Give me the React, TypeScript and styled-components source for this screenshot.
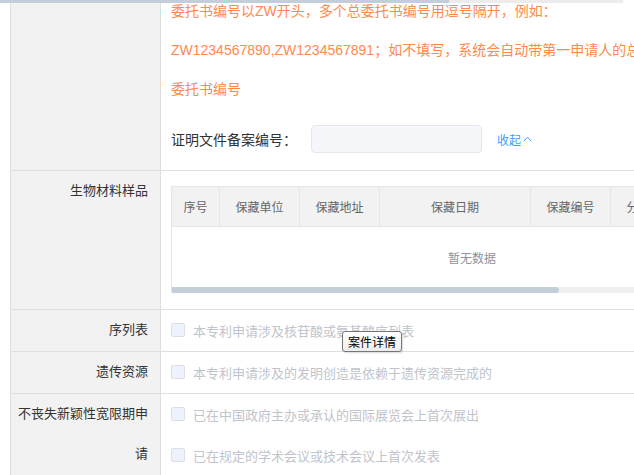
import React from "react";
import styled, { createGlobalStyle } from "styled-components";

const GlobalStyle = createGlobalStyle`
  html, body { margin: 0; padding: 0; background: #fff; }
  body {
    font-family: "Liberation Sans", "Noto Sans CJK SC", sans-serif;
    color: #333;
  }
`;

const Viewport = styled.div`
  position: relative;
  width: 634px;
  height: 475px;
  overflow: hidden;
  background: #fff;
`;

const TopTrack = styled.div`
  position: absolute;
  top: 0;
  left: 0;
  width: 623px;
  height: 3px;
  background: #ececec;
  z-index: 3;
`;

const TopThumb = styled.div`
  width: 449px;
  height: 3px;
  background: #c4ced9;
`;

const Scroller = styled.div`
  margin-top: -8px;
  padding-left: 10px;
`;

const Form = styled.div`
  width: 900px;
  border-left: 1px solid #dedede;
`;

const Row = styled.div`
  display: grid;
  grid-template-columns: 150px 1fr;
  border-bottom: 1px solid #e0e0e0;
`;

const Label = styled.div`
  box-sizing: border-box;
  background: #f2f2f2;
  border-right: 1px solid #dedede;
  text-align: right;
  padding: 0 12px 1px 0;
  font-size: 13px;
  line-height: 40px;
  color: #333;
`;

const Content = styled.div<{ $pad?: string }>`
  padding: ${(p) => p.$pad ?? "0 0 1px"};
  padding-left: 10px;
  min-width: 0;
`;

const Note = styled.div`
  font-size: 14px;
  line-height: 39px;
  color: #ff8a4c;
  white-space: nowrap;
`;

const FilingLine = styled.div`
  display: flex;
  align-items: center;
  height: 40px;
  margin: 10px 0 11px;
`;

const FieldLabel = styled.span`
  font-size: 14px;
  color: #333;
  width: 140px;
  white-space: nowrap;
`;

const TextInput = styled.div`
  box-sizing: border-box;
  width: 171px;
  height: 28px;
  background: #f5f7fa;
  border: 1px solid #e4e7ed;
  border-radius: 4px;
`;

const Toggle = styled.span`
  margin-left: 15px;
  display: inline-flex;
  align-items: center;
  gap: 2px;
  font-size: 12px;
  color: #409eff;
`;

const TableBox = styled.div`
  width: 600px;
  border: 1px solid #e6e6e6;
  border-bottom: none;
  overflow: hidden;
`;

const HeadRow = styled.div`
  box-sizing: border-box;
  display: flex;
  height: 40px;
  background: #f2f2f2;
  border-bottom: 1px solid #e6e6e6;
`;

const HeadCell = styled.div<{ $w: number }>`
  flex: 0 0 ${(p) => p.$w}px;
  box-sizing: border-box;
  border-right: 1px solid #e6e6e6;
  display: flex;
  align-items: center;
  justify-content: center;
  font-size: 12px;
  color: #666;
  white-space: nowrap;
  &:last-child { border-right: none; }
`;

const Empty = styled.div`
  height: 60px;
  display: flex;
  align-items: center;
  justify-content: center;
  font-size: 12px;
  color: #909399;
`;

const ScrollTrack = styled.div`
  height: 6px;
  background: #f0f0f0;
`;

const ScrollThumb = styled.div`
  height: 6px;
  width: 387px;
  background: #c4ced9;
  border-radius: 0 3px 3px 0;
`;

const CheckLine = styled.div`
  display: flex;
  align-items: center;
  height: 40px;
  & + & { margin-top: 1px; }
`;

const Box = styled.span`
  box-sizing: border-box;
  width: 14px;
  height: 14px;
  background: #edf2fc;
  border: 1px solid #dcdfe6;
  border-radius: 2px;
  flex: none;
`;

const CheckText = styled.span`
  margin-left: 8px;
  font-size: 13px;
  color: #c0c4cc;
  white-space: nowrap;
`;

const Tooltip = styled.div`
  position: absolute;
  left: 342px;
  top: 331px;
  box-sizing: border-box;
  width: 60px;
  height: 21px;
  border: 1px solid #767676;
  border-radius: 3px;
  background: linear-gradient(#ffffff, #ededed);
  box-shadow: 1px 1px 2px rgba(0, 0, 0, 0.15);
  font-size: 12px;
  color: #000;
  display: flex;
  align-items: center;
  justify-content: center;
  z-index: 4;
`;

const columns: [string, number][] = [
  ["序号", 48],
  ["保藏单位", 80],
  ["保藏地址", 80],
  ["保藏日期", 151],
  ["保藏编号", 80],
  ["分类命名", 80],
  ["操作", 81],
];

const Check = ({ text }: { text: string }) => (
  <CheckLine>
    <Box />
    <CheckText>{text}</CheckText>
  </CheckLine>
);

export default function App() {
  return (
    <Viewport>
      <GlobalStyle />
      <TopTrack>
        <TopThumb />
      </TopTrack>
      <Scroller>
        <Form>
          <Row>
            <Label />
            <Content $pad="0">
              <Note>委托书编号以ZW开头，多个总委托书编号用逗号隔开，例如：</Note>
              <Note>ZW1234567890,ZW1234567891；如不填写，系统会自动带第一申请人的总委托书编号</Note>
              <Note>委托书编号</Note>
              <FilingLine>
                <FieldLabel>证明文件备案编号：</FieldLabel>
                <TextInput />
                <Toggle>
                  收起
                  <svg width="9" height="6" viewBox="0 0 9 6" fill="none">
                    <polyline points="0.8,5.2 4.5,1.2 8.2,5.2" stroke="#409eff" strokeWidth="1" />
                  </svg>
                </Toggle>
              </FilingLine>
            </Content>
          </Row>
          <Row>
            <Label>生物材料样品</Label>
            <Content $pad="15px 0 16px">
              <TableBox>
                <HeadRow>
                  {columns.map(([name, w]) => (
                    <HeadCell key={name} $w={w}>
                      {name}
                    </HeadCell>
                  ))}
                </HeadRow>
                <Empty>暂无数据</Empty>
                <ScrollTrack>
                  <ScrollThumb />
                </ScrollTrack>
              </TableBox>
            </Content>
          </Row>
          <Row>
            <Label>序列表</Label>
            <Content>
              <Check text="本专利申请涉及核苷酸或氨基酸序列表" />
            </Content>
          </Row>
          <Row>
            <Label>遗传资源</Label>
            <Content>
              <Check text="本专利申请涉及的发明创造是依赖于遗传资源完成的" />
            </Content>
          </Row>
          <Row>
            <Label>不丧失新颖性宽限期申请</Label>
            <Content>
              <Check text="已在中国政府主办或承认的国际展览会上首次展出" />
              <Check text="已在规定的学术会议或技术会议上首次发表" />
              <Check text="他人未经申请人同意而泄露其内容" />
            </Content>
          </Row>
        </Form>
      </Scroller>
      <Tooltip>案件详情</Tooltip>
    </Viewport>
  );
}
